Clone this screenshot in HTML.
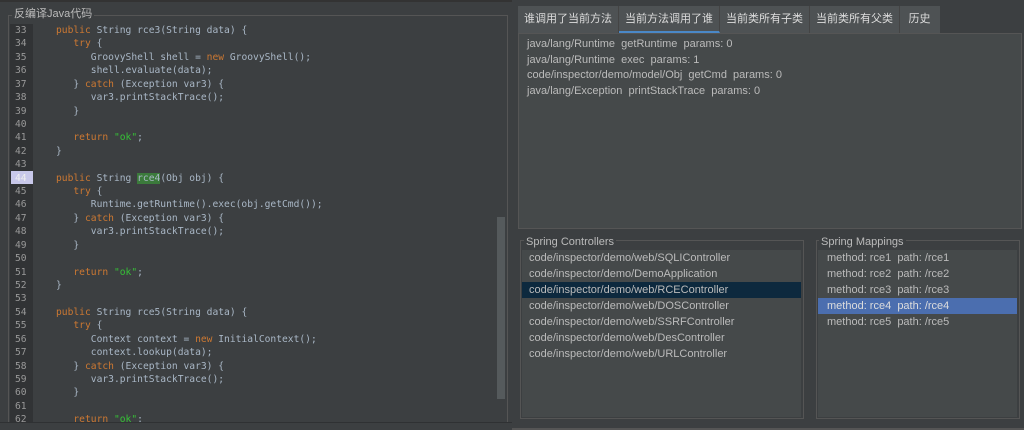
<!DOCTYPE html>
<html><head><meta charset="utf-8"><style>
*{margin:0;padding:0;box-sizing:border-box}
body{width:1024px;height:430px;background:#3c3f41;position:relative;overflow:hidden;font-family:"Liberation Sans","Noto Sans CJK SC",sans-serif;color:#bbbbbb}
.abs{position:absolute}
.code{font-family:"DejaVu Sans Mono",monospace;font-size:9.65px;color:#a9b7c6;white-space:pre;line-height:13.42px}
.k{color:#cc7832}.s{color:#36c236}
.ln{font-family:"DejaVu Sans Mono",monospace;font-size:9.65px;color:#999;line-height:13.42px;text-align:left}
.list div{height:16px;line-height:16px;font-size:11px;padding-left:7px;color:#bbb;white-space:nowrap}
</style></head><body>
<div class="abs" style="left:0;top:0;width:512px;height:2px;background:#333"></div>
<div class="abs" style="left:8px;top:15px;width:500px;height:408px;border:1px solid #555"></div>
<div class="abs" style="left:12px;top:5px;font-size:11px;background:#3c3f41;padding:0 2px;color:#bbb">反编译Java代码</div>
<div class="abs" style="left:10px;top:24px;width:23px;height:398px;background:#313335"></div>
<div class="abs" style="left:11px;top:171px;width:22px;height:13px;background:#c8c8ea"></div>
<div class="abs ln" style="left:15px;top:24px">33<br>34<br>35<br>36<br>37<br>38<br>39<br>40<br>41<br>42<br>43<br><span style="color:#eee">44</span><br>45<br>46<br>47<br>48<br>49<br>50<br>51<br>52<br>53<br>54<br>55<br>56<br>57<br>58<br>59<br>60<br>61<br>62</div>
<div class="abs code" style="left:56px;top:24px"><span class="k">public</span> String rce3(String data) {
   <span class="k">try</span> {
      GroovyShell shell = <span class="k">new</span> GroovyShell();
      shell.evaluate(data);
   } <span class="k">catch</span> (Exception var3) {
      var3.printStackTrace();
   }

   <span class="k">return</span> <span class="s">"ok"</span>;
}

<span class="k">public</span> String <span style="background:#3b7a3b">rce4</span>(Obj obj) {
   <span class="k">try</span> {
      Runtime.getRuntime().exec(obj.getCmd());
   } <span class="k">catch</span> (Exception var3) {
      var3.printStackTrace();
   }

   <span class="k">return</span> <span class="s">"ok"</span>;
}

<span class="k">public</span> String rce5(String data) {
   <span class="k">try</span> {
      Context context = <span class="k">new</span> InitialContext();
      context.lookup(data);
   } <span class="k">catch</span> (Exception var3) {
      var3.printStackTrace();
   }

   <span class="k">return</span> <span class="s">"ok"</span>;</div>
<div class="abs" style="left:497px;top:217px;width:8px;height:182px;background:#555a5c"></div>
<div class="abs" style="left:0;top:422px;width:512px;height:8px;background:#3c3f41;border-top:1px solid #2f3133"></div>

<div class="abs" style="left:518px;top:6px;width:422px;height:27px;background:#4e5254"></div>
<div class="abs" style="left:518px;top:6px;height:27px;font-size:11px;color:#ddd;display:flex">
<div style="width:101px;text-align:center;line-height:27px;border-right:1px solid #444">谁调用了当前方法</div>
<div style="width:101px;text-align:center;line-height:26px;border-bottom:2px solid #4a88c7;border-right:1px solid #444">当前方法调用了谁</div>
<div style="width:90px;text-align:center;line-height:27px;border-right:1px solid #444">当前类所有子类</div>
<div style="width:90px;text-align:center;line-height:27px;border-right:1px solid #444">当前类所有父类</div>
<div style="width:39px;text-align:center;line-height:27px">历史</div>
</div>
<div class="abs" style="left:518px;top:33px;width:504px;height:196px;background:#45494a;border:1px solid #555"></div>
<div class="abs list" style="left:520px;top:37px"><div style="height:15.7px;line-height:15.7px">java/lang/Runtime&nbsp; getRuntime&nbsp; params: 0</div><div style="height:15.7px;line-height:15.7px">java/lang/Runtime&nbsp; exec&nbsp; params: 1</div><div style="height:15.7px;line-height:15.7px">code/inspector/demo/model/Obj&nbsp; getCmd&nbsp; params: 0</div><div style="height:15.7px;line-height:15.7px">java/lang/Exception&nbsp; printStackTrace&nbsp; params: 0</div></div>

<div class="abs" style="left:520px;top:240px;width:284px;height:179px;border:1px solid #555"></div>
<div class="abs" style="left:522px;top:250px;width:279px;height:167px;background:#45494a"></div>
<div class="abs" style="left:524px;top:236px;font-size:11px;background:#3c3f41;padding:0 2px;color:#bbb">Spring Controllers</div>
<div class="abs list" style="left:522px;top:250px;width:279px">
<div>code/inspector/demo/web/SQLIController</div>
<div>code/inspector/demo/DemoApplication</div>
<div style="background:#0d293e">code/inspector/demo/web/RCEController</div>
<div>code/inspector/demo/web/DOSController</div>
<div>code/inspector/demo/web/SSRFController</div>
<div>code/inspector/demo/web/DesController</div>
<div>code/inspector/demo/web/URLController</div></div>

<div class="abs" style="left:816px;top:240px;width:204px;height:179px;border:1px solid #555"></div>
<div class="abs" style="left:818px;top:250px;width:199px;height:167px;background:#45494a"></div>
<div class="abs" style="left:819px;top:236px;font-size:11px;background:#3c3f41;padding:0 2px;color:#bbb">Spring Mappings</div>
<div class="abs list" style="left:818px;top:250px;width:199px">
<div style="padding-left:9px">method: rce1&nbsp; path: /rce1</div>
<div style="padding-left:9px">method: rce2&nbsp; path: /rce2</div>
<div style="padding-left:9px">method: rce3&nbsp; path: /rce3</div>
<div style="padding-left:9px;background:#4b6eaf;color:#ddd">method: rce4&nbsp; path: /rce4</div>
<div style="padding-left:9px">method: rce5&nbsp; path: /rce5</div></div>
<div class="abs" style="left:512px;top:428px;width:512px;height:2px;background:#555"></div>
</body></html>
